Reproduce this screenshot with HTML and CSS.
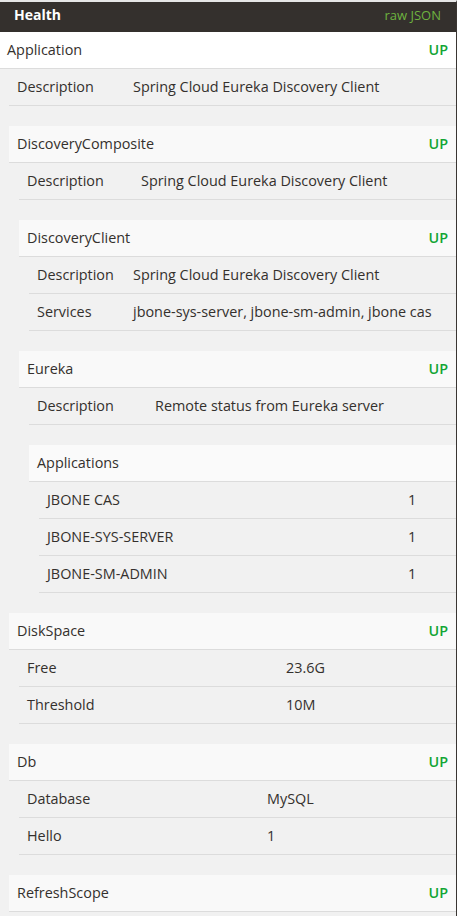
FILE: index.html
```html
<!DOCTYPE html>
<html>
<head>
<meta charset="utf-8">
<link rel="stylesheet" href="styles.css">
</head>
<body>
<div class="panel">
  <header class="bar"><span class="title">Health</span><span class="raw">raw JSON</span></header>
  <section class="group root">
    <div class="head"><span class="name">Application</span><span class="up">UP</span></div>
    <div class="body">
      <div class="row k124"><span>Description</span><span>Spring Cloud Eureka Discovery Client</span></div>

      <section class="group">
        <div class="head"><span class="name">DiscoveryComposite</span><span class="up">UP</span></div>
        <div class="body">
          <div class="row k122"><span>Description</span><span>Spring Cloud Eureka Discovery Client</span></div>

          <section class="group">
            <div class="head"><span class="name">DiscoveryClient</span><span class="up">UP</span></div>
            <div class="body">
              <div class="row k104"><span>Description</span><span>Spring Cloud Eureka Discovery Client</span></div>
              <div class="row k104"><span>Services</span><span>jbone-sys-server, jbone-sm-admin, jbone cas</span></div>
            </div>
          </section>

          <section class="group">
            <div class="head"><span class="name">Eureka</span><span class="up">UP</span></div>
            <div class="body">
              <div class="row k126"><span>Description</span><span>Remote status from Eureka server</span></div>
              <section class="group">
                <div class="head plain"><span class="name">Applications</span></div>
                <div class="body">
                  <div class="row k369"><span>JBONE CAS</span><span>1</span></div>
                  <div class="row k369"><span>JBONE-SYS-SERVER</span><span>1</span></div>
                  <div class="row k369"><span>JBONE-SM-ADMIN</span><span>1</span></div>
                </div>
              </section>
            </div>
          </section>
        </div>
      </section>

      <section class="group">
        <div class="head"><span class="name">DiskSpace</span><span class="up">UP</span></div>
        <div class="body">
          <div class="row k267"><span>Free</span><span>23.6G</span></div>
          <div class="row k267"><span>Threshold</span><span>10M</span></div>
        </div>
      </section>

      <section class="group">
        <div class="head"><span class="name">Db</span><span class="up">UP</span></div>
        <div class="body">
          <div class="row k248"><span>Database</span><span>MySQL</span></div>
          <div class="row k248"><span>Hello</span><span>1</span></div>
        </div>
      </section>

      <section class="group">
        <div class="head"><span class="name">RefreshScope</span><span class="up">UP</span></div>
      </section>
    </div>
  </section>
</div>
</body>
</html>
```

FILE: styles.css
```css
html, body {
  margin: 0;
  padding: 0;
  background: #ffffff;
}
body {
  font-family: "Open Sans", "Noto Sans", sans-serif;
  font-size: 14.4px;
  color: #34302d;
}
.panel {
  width: 457px;
  height: 916px;
  box-sizing: border-box;
  overflow: hidden;
  background: #f1f1f1;
  border-top: 2px solid #e6e6e6;
  border-right: 1px solid #3a3633;
}
.bar {
  height: 30px;
  background: #34302d;
  margin-right: -1px;
  display: flex;
  align-items: center;
  justify-content: space-between;
  padding: 0 16px 5px 14px;
  box-sizing: border-box;
}
.title {
  color: #ffffff;
  font-weight: 700;
  font-size: 14px;
}
.raw {
  color: #6db33f;
  font-size: 13px;
}
.group {
  margin-top: 20px;
}
.group.root {
  margin-top: 0;
}
.head {
  height: 36px;
  border-bottom: 1px solid #dcdcdc;
  background: #f9f9f9;
  display: flex;
  align-items: center;
  justify-content: space-between;
  padding: 0 8px 1px;
  box-sizing: border-box;
  height: 37px;
}
.root > .head {
  background: #ffffff;
  padding-left: 7px;
}
.head.plain {
  background: #fafafa;
}
.up {
  color: #12a535;
  font-weight: 600;
  font-size: 14.4px;
}
.body {
  margin-left: 10px;
}
.root > .body {
  margin-left: 9px;
}
.row {
  height: 37px;
  box-sizing: border-box;
  padding-bottom: 1px;
  border-bottom: 1px solid #dcdcdc;
  display: grid;
  align-items: center;
  padding-left: 8px;
}
.k124 { grid-template-columns: 116px 1fr; }
.k122 { grid-template-columns: 114px 1fr; }
.k104 { grid-template-columns: 96px 1fr; }
.k126 { grid-template-columns: 118px 1fr; }
.k369 { grid-template-columns: 361px 1fr; }
.k267 { grid-template-columns: 259px 1fr; }
.k248 { grid-template-columns: 240px 1fr; }
```
